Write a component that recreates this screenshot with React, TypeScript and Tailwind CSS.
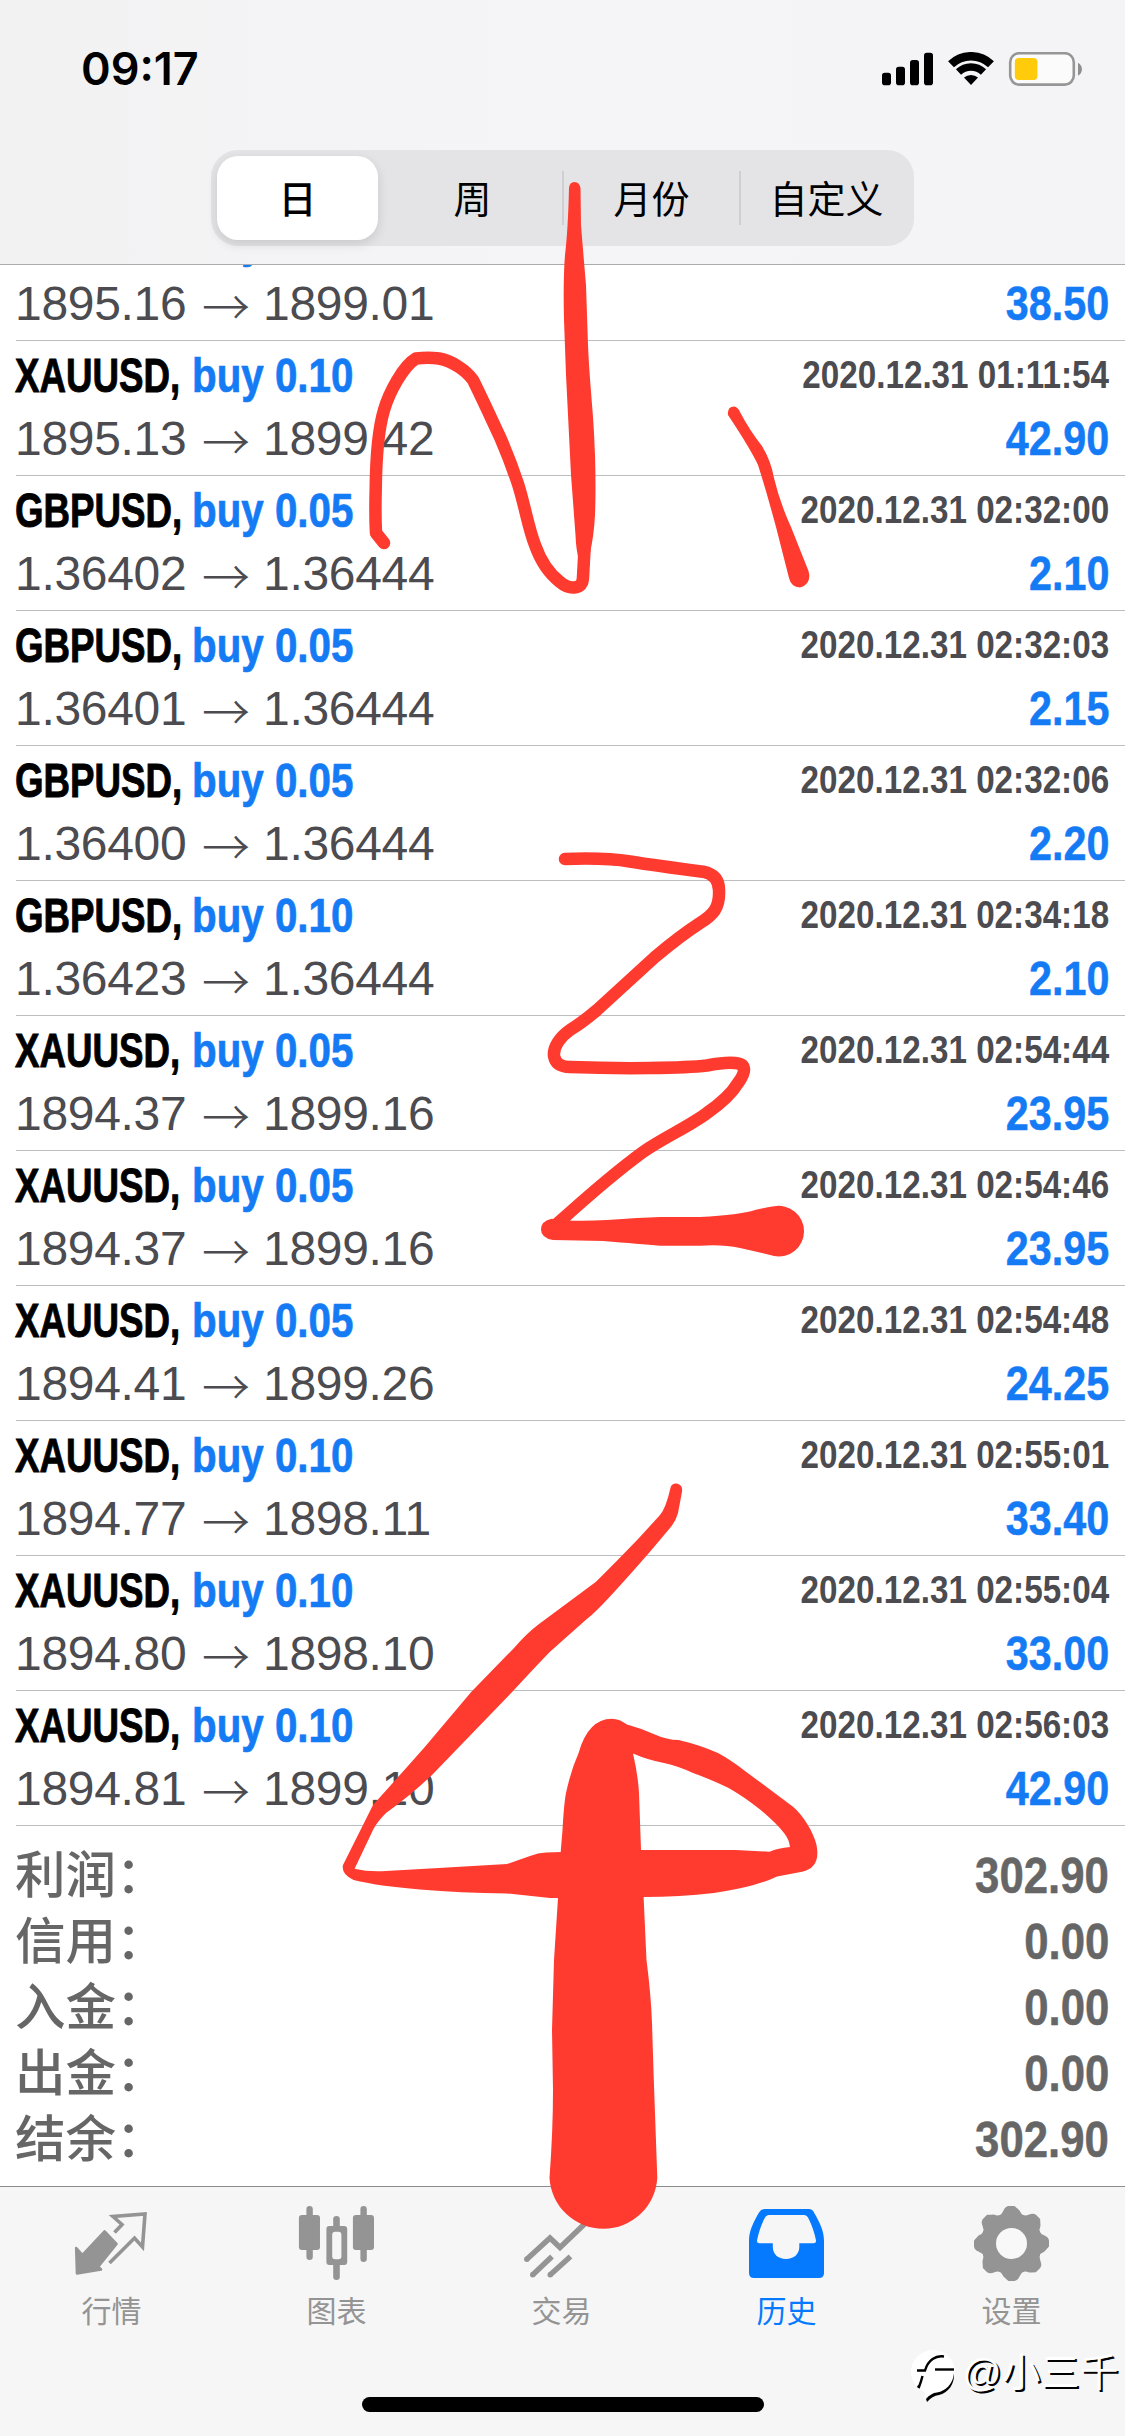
import { ReactNode } from 'react'

type Deal = { symbol: string, side: string, time: string, from: string, to: string, profit: string }

const deals: Deal[] = [
	{ symbol: 'XAUUSD', side: 'buy 0.10', time: '', from: '1895.16', to: '1899.01', profit: '38.50' },
	{ symbol: 'XAUUSD', side: 'buy 0.10', time: '2020.12.31 01:11:54', from: '1895.13', to: '1899.42', profit: '42.90' },
	{ symbol: 'GBPUSD', side: 'buy 0.05', time: '2020.12.31 02:32:00', from: '1.36402', to: '1.36444', profit: '2.10' },
	{ symbol: 'GBPUSD', side: 'buy 0.05', time: '2020.12.31 02:32:03', from: '1.36401', to: '1.36444', profit: '2.15' },
	{ symbol: 'GBPUSD', side: 'buy 0.05', time: '2020.12.31 02:32:06', from: '1.36400', to: '1.36444', profit: '2.20' },
	{ symbol: 'GBPUSD', side: 'buy 0.10', time: '2020.12.31 02:34:18', from: '1.36423', to: '1.36444', profit: '2.10' },
	{ symbol: 'XAUUSD', side: 'buy 0.05', time: '2020.12.31 02:54:44', from: '1894.37', to: '1899.16', profit: '23.95' },
	{ symbol: 'XAUUSD', side: 'buy 0.05', time: '2020.12.31 02:54:46', from: '1894.37', to: '1899.16', profit: '23.95' },
	{ symbol: 'XAUUSD', side: 'buy 0.05', time: '2020.12.31 02:54:48', from: '1894.41', to: '1899.26', profit: '24.25' },
	{ symbol: 'XAUUSD', side: 'buy 0.10', time: '2020.12.31 02:55:01', from: '1894.77', to: '1898.11', profit: '33.40' },
	{ symbol: 'XAUUSD', side: 'buy 0.10', time: '2020.12.31 02:55:04', from: '1894.80', to: '1898.10', profit: '33.00' },
	{ symbol: 'XAUUSD', side: 'buy 0.10', time: '2020.12.31 02:56:03', from: '1894.81', to: '1899.10', profit: '42.90' },
]

const totals = [
	{ label: '利润：', value: '302.90' },
	{ label: '信用：', value: '0.00' },
	{ label: '入金：', value: '0.00' },
	{ label: '出金：', value: '0.00' },
	{ label: '结余：', value: '302.90' },
]

function StatusBar() {
	return (
		<div className="flex h-[150px] items-start justify-between pl-[81px] pr-[43px]">
			<span className="mt-[42px] font-['Inter','Liberation_Sans',sans-serif] text-[45px] font-semibold leading-[54px] text-black">09:17</span>
			<svg className="mt-[52px]" width="200" height="34" viewBox="882 52 200 34">
				<rect x="882" y="72.7" width="9" height="12.5" rx="2.8" />
				<rect x="896" y="66.7" width="9" height="18.5" rx="2.8" />
				<rect x="910" y="60" width="9" height="25.2" rx="2.8" />
				<rect x="924" y="52.7" width="9" height="32.5" rx="2.8" />
				<path d="M951 64.3a28.7 28.7 0 0 1 40 0" fill="none" stroke="#000" strokeWidth="8.4" />
				<path d="M958.5 72a18 18 0 0 1 25 0" fill="none" stroke="#000" strokeWidth="7.4" />
				<path d="M971 85l-7-7.4a10.5 10.5 0 0 1 14 0z" />
				<rect x="1010.2" y="53.2" width="63.6" height="31.4" rx="9" fill="#fbfbfb" stroke="#969696" strokeWidth="2.6" />
				<rect x="1014.8" y="58" width="22.6" height="22" rx="4" fill="#ffcb0a" />
				<path d="M1078 62.7c5.2 2.4 5.2 10.6 0 13z" fill="#8e8e8e" />
			</svg>
		</div>
	)
}

function PeriodTabs() {
	return (
		<div className="mx-auto flex h-24 w-[703px] items-center rounded-[27px] bg-[#e4e4e6] p-[6px] text-[38px] leading-none text-black">
			<div className="flex h-[84px] w-[161px] items-center justify-center rounded-[21px] bg-white pt-[3px] font-medium shadow-[0_4px_12px_rgba(0,0,0,0.12)]">日</div>
			<div className="w-[184px] pl-[5px] pt-[3px] text-center">周</div>
			<div className="h-[54px] w-[2px] bg-[#cfcfd1]"></div>
			<div className="w-[175px] pt-[3px] text-center">月份</div>
			<div className="h-[54px] w-[2px] bg-[#cfcfd1]"></div>
			<div className="flex-1 pl-[4px] pt-[3px] text-center">自定义</div>
		</div>
	)
}

function DealRow({ deal }: { deal: Deal }) {
	return (
		<div className="ml-4 flex h-[135px] shrink-0 flex-col gap-[15px] border-b border-[#bdbdc0] pr-4 pt-[11px] text-[48px] leading-[48px]">
			<div className="-ml-px flex h-12 items-center justify-between font-bold">
				<div className="flex">
					<div className="w-[177px] whitespace-nowrap text-black [-webkit-text-stroke:0.9px]"><span className="inline-block origin-left scale-x-[0.765]">{deal.symbol},</span></div>
					<div className="w-[200px] whitespace-nowrap text-[#147bf5] [-webkit-text-stroke:0.7px]"><span className="inline-block origin-left scale-x-[0.84]">{deal.side}</span></div>
				</div>
				{deal.time && <span className="-mt-[2px] inline-block origin-right scale-x-[0.852] whitespace-nowrap text-[39px] text-[#4b4b50]">{deal.time}</span>}
			</div>
			<div className="-ml-px flex h-12 items-center justify-between">
				<div className="flex whitespace-nowrap text-[#4b4b50]">
					<span className="w-[174px] tracking-[-0.3px]">{deal.from}</span>
					<span className="w-[74px] text-center font-['Noto_Sans_CJK_SC',sans-serif] font-light">→</span>
					<span className="tracking-[-0.3px]">{deal.to}</span>
				</div>
				<span className="inline-block origin-right scale-x-[0.86] font-bold text-[#147bf5] [-webkit-text-stroke:0.5px]">{deal.profit}</span>
			</div>
		</div>
	)
}

function Summary() {
	return (
		<div className="flex flex-col pl-[15px] pr-4 pt-[17px] text-[#666666]">
			{totals.map((item) => (
				<div key={item.label} className="flex h-[66px] items-center justify-between">
					<span className="text-[50.5px] font-medium leading-[66px]">{item.label}</span>
					<span className="inline-block origin-right scale-x-[0.875] text-[50px] font-bold leading-[66px] [-webkit-text-stroke:0.5px]">{item.value}</span>
				</div>
			))}
		</div>
	)
}

function TabIcon({ children }: { children: ReactNode }) {
	return <svg width="80" height="80" viewBox="0 0 80 80" fill="currentColor">{children}</svg>
}

function QuotesIcon() {
	return (
		<TabIcon>
			<path d="M42.5 28.5L50 20.5 41 12.5 73 10 70.5 43 62.5 34 37.5 59" fill="none" stroke="currentColor" strokeWidth="3.6" />
			<path d="M32.6 27.5L44.5 40 26.2 62.7 29 65.5 5 69.5 4.2 44 10.5 51z" stroke="currentColor" strokeWidth="2.6" strokeLinejoin="round" />
		</TabIcon>
	)
}

function ChartIcon() {
	return (
		<TabIcon>
			<rect x="1.9" y="11" width="21.1" height="35" rx="3" />
			<rect x="9.4" y="2" width="6.4" height="54" rx="3.2" />
			<rect x="55.9" y="11" width="21.1" height="35" rx="3" />
			<rect x="63.4" y="2" width="6.4" height="56" rx="3.2" />
			<rect x="36.2" y="12" width="6.6" height="64" rx="3.3" />
			<rect x="29.4" y="22" width="20.8" height="39" rx="3" />
			<rect x="35.2" y="27.7" width="9.2" height="27.6" rx="3" fill="#f6f6f6" />
		</TabIcon>
	)
}

function TradeIcon() {
	return (
		<TabIcon>
			<g fill="none" stroke="currentColor" strokeWidth="5.4">
				<path d="M4.5 55.5L28 34 38 43.5 74 9" />
				<path d="M10.5 71L30 52.5" />
				<path d="M28 71L48.5 52.5" />
			</g>
			<circle cx="4.8" cy="55.3" r="2.7" />
			<circle cx="10.7" cy="70.8" r="2.7" />
			<circle cx="28.2" cy="70.8" r="2.7" />
		</TabIcon>
	)
}

function HistoryIcon() {
	return (
		<TabIcon>
			<path fillRule="evenodd" d="M18 5H62Q65.500 5 67 8.500C73 19 77 27 77 37V69Q77 74 72 74H7Q2 74 2 69V37C2 27 6 19 12 8.500Q14 5 18 5ZM22 11Q19 11 17.500 14.500C14 21 11.500 29 10 36.500Q9.700 39.300 12.500 39.300H25.800V43C25.800 50 31 55 39 55S52.300 50 52.300 43V39.300H66.500Q69.300 39.300 69 36.500C67.500 29 65 21 61.500 14.500Q60 11 57 11Z" />
		</TabIcon>
	)
}

function SettingsIcon() {
	return (
		<TabIcon>
			<circle cx="39.500" cy="39.500" r="30.500" />
			{[0, 45, 90, 135, 180, 225, 270, 315].map((angle) => (
				<path key={angle} d="M26.500 12Q30 10.500 31.500 6.500T36.500 2H42.500T47.500 6.500Q49 10.500 52.500 12L39.500 30z" transform={`rotate(${angle} 39.5 39.5)`} />
			))}
			<circle cx="39.500" cy="39.500" r="15.500" fill="#f8f8f8" />
		</TabIcon>
	)
}

const tabs = [
	{ label: '行情', icon: <QuotesIcon /> },
	{ label: '图表', icon: <ChartIcon /> },
	{ label: '交易', icon: <TradeIcon /> },
	{ label: '历史', icon: <HistoryIcon />, active: true },
	{ label: '设置', icon: <SettingsIcon /> },
]

function TabBar() {
	return (
		<div className="flex h-[250px] shrink-0 flex-col border-t border-[#8c8c8c] bg-[#f6f6f6]">
			<div className="-ml-px flex pt-[17px]">
				{tabs.map((tab) => (
					<div key={tab.label} className={tab.active ? 'flex w-[225px] flex-col items-center text-[#067aff]' : 'flex w-[225px] flex-col items-center text-[#949494]'}>
						{tab.icon}
						<span className="mt-[6px] text-[30px] leading-[44px]">{tab.label}</span>
					</div>
				))}
			</div>
			<div className="mx-auto mt-[63px] h-[15px] w-[402px] rounded-full bg-black"></div>
		</div>
	)
}

// red finger drawing over the list: 小 三 千
function Scribble() {
	return (
		<svg className="pointer-events-none absolute left-0 top-0" width="1125" height="2436" viewBox="0 0 1125 2436" fill="#ff3b30">
			<g fill="none" stroke="#ff3b30" strokeWidth="12.500" strokeLinecap="round" strokeLinejoin="round">
				<path d="M384 543L376 533Q375 515 375.700 490C376 460 378 430 384 410C389 393 403 366 416 358.500Q428 357 439 358.500C452 361 466 370 473 380C482 398 492 420 500 437Q510 460 518 484C525 506 528 527 535 545C541 562 551 575 560 582Q567 588 574 587.500Q583 587 583 577L584.500 550" />
				<path d="M565 859Q605 857.500 630 861.500T703 871.700Q719 875 719 890C720 908 713 915 700 923Q680 936 655 957L597 1010Q583 1022 570 1030C560 1037 553 1047 554 1056Q556 1067 570 1067Q610 1068.500 650 1068T707 1065.500Q725 1062 735 1063C747 1064 746 1072 738 1083C732 1093 720 1104 707 1113C690 1126 663 1138 643 1152Q610 1176 557 1224" />
			</g>
			<path d="M569 188Q569.500 182 574.500 182T580.500 188L581 225Q583 250 586 285L588 345C590 390 594 415 595 455Q596 490 595 515Q594 535 590 553L579 560Q576 550 575.500 535L571 475 566 375 564 320Q563 280 565 255Q568 230 569 188Z" />
			<path d="M728 415Q727 407 734 406.500Q738 407 740 412Q750 431 762 446Q771 461 774 478Q780 503 791 527L808.500 571Q812 584 800 587.500Q791 587 789 578L776 527Q766 490 758 465Q750 448 728 415Z" />
			<path d="M551.700 1218.700Q570 1222 607 1220Q640 1217.500 660 1217H700Q740 1215 755 1210Q763 1208 774 1206.300A25.300 25.300 0 1 1 774 1256Q758 1252 740 1248T700 1245.700H660Q640 1244 603 1241L553 1240Q541 1238 541 1229.500T551.700 1218.700Z" />
			<path fillRule="evenodd" d="M670.700 1487Q672 1483 677 1483.500Q683 1485 682 1491.700L678 1513Q676 1521 670 1528L650 1551.700Q614 1593 598 1609Q592 1615 585.700 1620L550 1651.700Q537 1665 514 1690L432 1775Q411 1795 386 1813Q377 1822 373 1830L354.600 1868.700Q368 1872 386 1871L443 1867.700 507 1864 530 1856Q538 1852.500 546 1852.500L562 1852V1898L550 1898Q530 1896 507 1893.500Q460 1893 420 1889.500Q378 1886 353.600 1880Q341 1874 343 1865L373 1805Q400 1775 425 1746.700L471.400 1691.700 514 1648Q527 1633 539 1624Q566 1604 596 1581.700Q615 1563 639 1538L660 1515Q666 1508 670.700 1487Z" />
			<path fillRule="evenodd" d="M611.800 1718.700Q620 1719 627 1724.500Q640 1728 653.600 1734T678.600 1740Q700 1745 718 1753Q731 1760 746 1771.700L793 1806.700C803 1815 814 1833 816.500 1845Q821 1868 802 1871.700L777 1876.500Q768 1881 753.600 1885T714 1893Q680 1897 643.600 1897L646.500 1960Q651 1995 652 2023L653.700 2076.700 657.300 2178A54 54 0 0 1 549.500 2178Q553 2130 553 2090L552 2030 554 1960 558 1898 560.700 1852 562.500 1830Q564 1803 566 1793Q571 1770 578.600 1753Q588 1719 611.800 1718.700ZM633 1753.500Q638 1775 639 1793L641 1850 735.700 1850 769.600 1851.700Q778 1848 790 1847Q789 1839 784 1833Q777 1824 760.700 1810Q743 1796 728.600 1788Q710 1779 693 1773Q678 1766 664 1763Q648 1760 633 1753.500Z" />
		</svg>
	)
}

function Watermark() {
	return (
		<div className="absolute right-[6px] top-[2342px] flex items-center gap-[3px] whitespace-nowrap">
			<svg width="48" height="62" viewBox="0 0 48 62">
				<circle cx="22" cy="30" r="22" fill="#fff" />
				<path d="M12 56L17 46 31 50z" fill="#fff" />
				<g fill="none" stroke="#000" strokeWidth="2.400">
					<path d="M6 28.500H14C17 18 25 13 33 14.500" />
					<path d="M24 27.500H43" />
					<path d="M11.500 34Q10 40 8 45L6.500 44" />
				</g>
				<path d="M43 31C42 42 35 49 26 50.500Q20 51 15 57L16 60Q21 54 28 53C37 51 44 42 43 31Z" />
			</svg>
			<span className="text-[38.5px] leading-[60px] tracking-[0.5px] text-white [text-shadow:2px_2px_0_#000]">@小三千</span>
		</div>
	)
}

export default function App() {

	return (
		<div className="relative flex h-[2436px] w-[1125px] flex-col overflow-hidden bg-white font-['Liberation_Sans','Noto_Sans_CJK_SC',sans-serif]">
			<div className="h-[265px] shrink-0 border-b border-[#acacae] bg-linear-to-r from-[#f2f2f3] via-[#f5f5f7] to-[#f4f4f6]">
				<StatusBar />
				<PeriodTabs />
			</div>
			<div className="flex h-[1921px] shrink-0 flex-col overflow-hidden">
				<div className="-mt-[59px] flex shrink-0 flex-col">
					{deals.map((deal, i) => (
						<DealRow key={i} deal={deal} />
					))}
				</div>
				<Summary />
			</div>
			<TabBar />
			<Scribble />
			<Watermark />
		</div>
	)
}
